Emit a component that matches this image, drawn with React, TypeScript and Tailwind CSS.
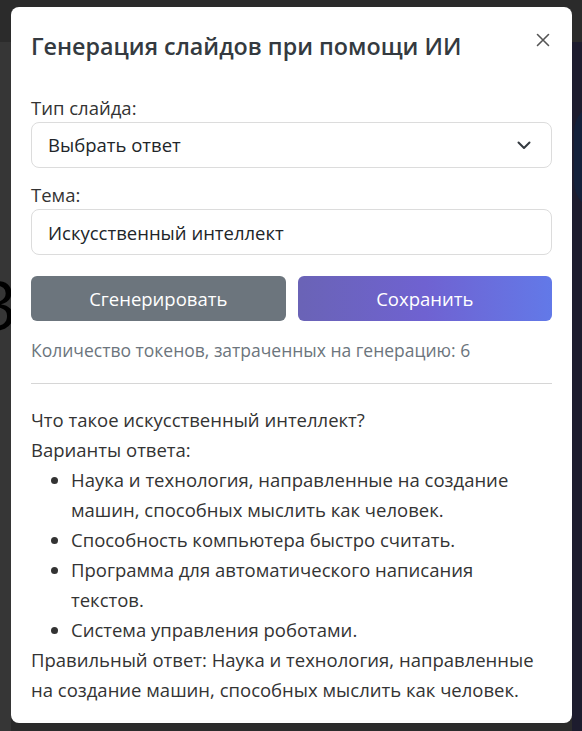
import { useState } from "react";

const options = [
  "Наука и технология, направленные на создание машин, способных мыслить как человек.",
  "Способность компьютера быстро считать.",
  "Программа для автоматического написания текстов.",
  "Система управления роботами.",
];

const App = () => {
  const [topic, setTopic] = useState("Искусственный интеллект");

  return (
    <div className="relative min-h-screen h-[731px] overflow-hidden bg-[#2b2b2b] font-['Open_Sans',sans-serif]">
      {/* page behind the overlay */}
      <div className="absolute left-0 top-[42px] w-[11px] bottom-0 bg-[#363636]">
        <span className="absolute left-[-22px] top-[228px] text-[68px] leading-none text-black">3</span>
      </div>
      <div className="absolute right-0 top-[42px] w-[10px] bottom-0 bg-[#1d1c2e]">
        <div className="absolute left-[2px] top-[60px] w-[60px] h-[110px] rounded-full bg-[#14213b]" />
      </div>

      <div className="relative pt-[7px] pl-[11px]">
        <div className="w-[561px] bg-white rounded-lg px-5 pt-[24px] pb-[18px] text-[#212529]">
          <div className="flex items-start justify-between">
            <h5 className="text-[23.3px] leading-[40px] font-semibold text-[#343a40] -mt-[5px]">
              Генерация слайдов при помощи ИИ
            </h5>
            <button className="mt-[2px] mr-[2px] text-[#555]">
              <svg width="14" height="14" viewBox="0 0 14 14" stroke="currentColor" strokeWidth="1.6" strokeLinecap="round">
                <path d="M1.5 1.5 12.5 12.5M12.5 1.5 1.5 12.5" />
              </svg>
            </button>
          </div>

          <div className="mt-[29px] flex flex-col">
            <label className="text-[18.5px] leading-[26px] text-[#333]">Тип слайда:</label>
            <div className="mt-[1px] h-[46px] border border-[#dcdcdc] rounded-lg flex items-center justify-between px-4">
              <span className="text-[18.5px] text-[#212529]">Выбрать ответ</span>
              <svg width="14" height="9" viewBox="0 0 14 9" fill="none" stroke="#343a40" strokeWidth="2" strokeLinecap="round" strokeLinejoin="round" className="mr-[4px]">
                <path d="M1.5 1.5 7 7l5.5-5.5" />
              </svg>
            </div>

            <label className="mt-[14px] text-[18.5px] leading-[26px] text-[#333]">Тема:</label>
            <input
              value={topic}
              onChange={(e) => setTopic(e.target.value)}
              className="mt-[1px] h-[46px] border border-[#dcdcdc] rounded-lg px-4 text-[18.5px] text-[#212529] outline-none"
            />
          </div>

          <div className="mt-[21px] grid grid-cols-2 gap-3">
            <button className="h-[45px] rounded-md bg-[#6c757d] text-white text-[18.5px]">Сгенерировать</button>
            <button className="h-[45px] rounded-md bg-gradient-to-r from-[#6a63b6] via-[#6f62d1] to-[#6279e8] text-white text-[18.5px]">
              Сохранить
            </button>
          </div>

          <p className="mt-[16px] text-[17.5px] leading-[26px] text-[#6c757d]">
            Количество токенов, затраченных на генерацию: 6
          </p>

          <hr className="mt-[20px] border-t border-[#d6d6d6]" />

          <div className="mt-[21px] text-[18.5px] leading-[30px] text-[#333]">
            <p>Что такое искусственный интеллект?</p>
            <p>Варианты ответа:</p>
            <ul className="list-disc pl-10 pr-4">
              {options.map((o) => (
                <li key={o}>{o}</li>
              ))}
            </ul>
            <p>Правильный ответ: {options[0]}</p>
          </div>
        </div>
      </div>
    </div>
  );
};

export default App;
